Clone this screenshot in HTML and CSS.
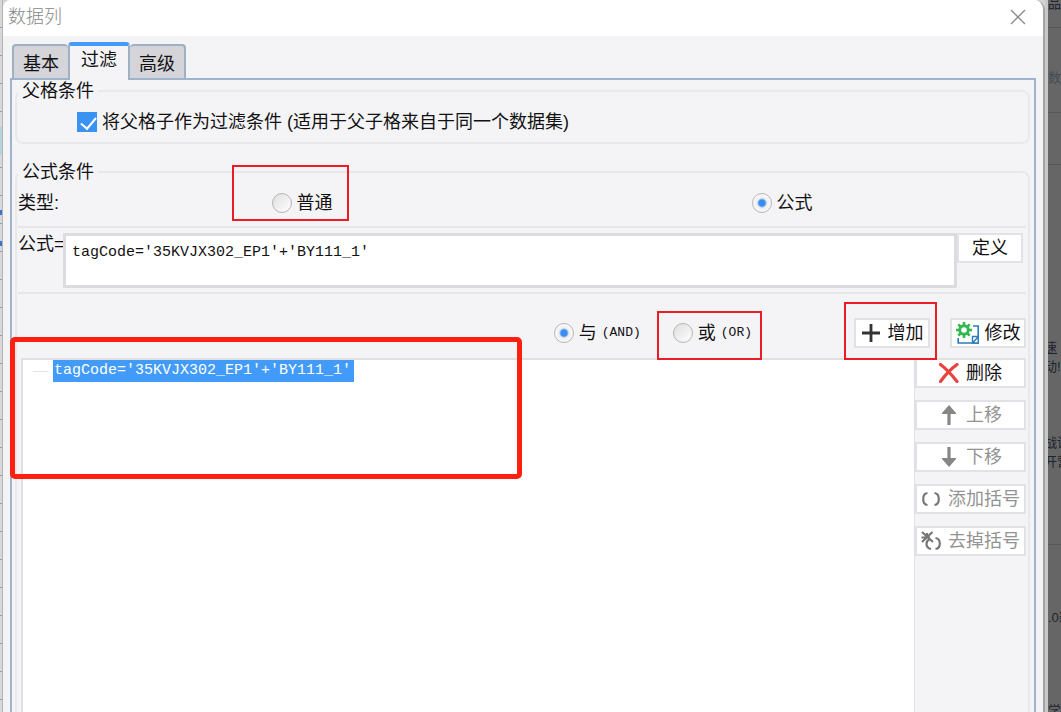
FILE: index.html
```html
<!DOCTYPE html>
<html lang="zh-CN">
<head>
  <meta charset="UTF-8" />
  <meta name="viewport" content="width=device-width, initial-scale=1.0" />
  <title>数据列</title>
  <link rel="stylesheet" href="styles.css">
</head>
<body>
  <div class="sheet-edge">
    <div class="cell-selected"></div>
    <div class="cell-handle"></div>
  </div>

  <main class="dialog">
    <header class="title-bar">
      <h1>数据列</h1>
      <button class="close" type="button" aria-label="关闭">
        <svg width="16" height="16" viewBox="0 0 16 16"><path d="M1 1L15 15M15 1L1 15" stroke="#8a8a8a" stroke-width="1.3" fill="none"/></svg>
      </button>
    </header>

    <div class="tabs" role="tablist">
      <button class="tab" type="button" role="tab">基本</button>
      <button class="tab active" type="button" role="tab" aria-selected="true">过滤</button>
      <button class="tab" type="button" role="tab">高级</button>
    </div>

    <div class="panel">
      <fieldset class="parent-group">
        <legend>父格条件</legend>
        <label class="option"><input type="checkbox" checked>将父格子作为过滤条件 (适用于父子格来自于同一个数据集)</label>
      </fieldset>

      <fieldset class="formula-group">
        <legend>公式条件</legend>

        <div class="type-row">
          <span>类型:</span>
          <label class="option"><input type="radio" name="type">普通</label>
          <label class="option"><input type="radio" name="type" checked>公式</label>
        </div>

        <div class="formula-row">
          <label for="formula">公式=</label>
          <textarea id="formula" class="code" spellcheck="false">tagCode='35KVJX302_EP1'+'BY111_1'</textarea>
          <button class="btn define" type="button">定义</button>
        </div>

        <div class="logic-row">
          <label class="option"><input type="radio" name="logic" checked>与<span class="latin">(AND)</span></label>
          <label class="option or"><input type="radio" name="logic">或<span class="latin">(OR)</span></label>
          <button class="btn add" type="button">
            <svg width="20" height="20" viewBox="0 0 20 20"><path d="M10 1V19M1 10H19" stroke="#333" stroke-width="2.8" fill="none"/></svg>
            增加
          </button>
          <button class="btn edit" type="button">
            <svg width="24" height="22" viewBox="0 0 24 22">
              <path d="M17 4H22.2V21H2.2V16" fill="none" stroke="#2b7cbf" stroke-width="1.6"/>
              <path d="M16.500 14.500H22.200V21H16.500ZM17 20.500L22 15" fill="#fff" stroke="#2b7cbf" stroke-width="1.4"/>
              <circle cx="8" cy="8" r="4.300" fill="#fff" stroke="#33b850" stroke-width="3"/>
              <path d="M8 0V3M8 13V16M0 8H3M13 8H16M2.300 2.300L4.500 4.500M11.500 11.500L13.700 13.700M13.700 2.300L11.500 4.500M4.500 11.500L2.300 13.700" stroke="#33b850" stroke-width="2.600"/>
            </svg>
            修改
          </button>
        </div>

        <div class="list-row">
          <ul class="conditions">
            <li><span class="code selected">tagCode='35KVJX302_EP1'+'BY111_1'</span></li>
          </ul>
          <div class="actions">
            <button class="btn" type="button">
              <svg width="20" height="20" viewBox="0 0 20 20"><path d="M1.500 1.500Q9 7 18 18.500M18 1.500Q9 8 1.500 18.500" stroke="#e8433f" stroke-width="3.2" fill="none" stroke-linecap="round"/></svg>
              删除
            </button>
            <button class="btn" type="button" disabled>
              <svg width="20" height="20" viewBox="0 0 20 20"><path d="M10 6V20" stroke="#868686" stroke-width="3.2"/><path d="M10 0L17 8V9H3V8Z" fill="#868686"/></svg>
              上移
            </button>
            <button class="btn" type="button" disabled>
              <svg width="20" height="20" viewBox="0 0 20 20"><path d="M10 0V14" stroke="#868686" stroke-width="3.2"/><path d="M10 20L17 12V11H3V12Z" fill="#868686"/></svg>
              下移
            </button>
            <button class="btn" type="button" disabled>
              <svg width="20" height="20" viewBox="0 0 20 20"><path d="M6.500 4Q2.200 4.500 2.200 10Q2.200 15.500 6.500 16M13.500 4Q17.800 4.500 17.800 10Q17.800 15.500 13.500 16" stroke="#777" stroke-width="2.2" fill="none"/></svg>
              添加括号
            </button>
            <button class="btn" type="button" disabled>
              <svg width="20" height="20" viewBox="0 0 20 20"><path d="M1 1L12 11M11.500 1L1 11M0.500 6.500H9M6 2V7" stroke="#777" stroke-width="2.2" fill="none"/><path d="M8.500 8.500Q5.500 9.500 5.500 13Q5.500 17 10 18M14.500 7Q18.800 7.500 18.800 12.500Q18.800 17.500 14.500 18" stroke="#777" stroke-width="2.2" fill="none"/></svg>
              去掉括号
            </button>
          </div>
        </div>
      </fieldset>
    </div>

    <div class="mark mark-type"></div>
    <div class="mark mark-or"></div>
    <div class="mark mark-add"></div>
    <div class="mark mark-list"></div>
  </main>

  <aside class="page-behind">
    <section class="bar">品</section>
    <section class="heading">数</section>
    <section class="blank"></section>
    <section class="news">
      <p><u>速</u><br>动!</p>
      <p>战训<br>开营</p>
    </section>
    <section class="release">
      <p>.0新</p>
      <p>学</p>
    </section>
  </aside>
</body>
</html>
```

FILE: styles.css
```css
* {
  box-sizing: border-box;
}

body {
  margin: 0;
  height: 100vh;
  display: flex;
  overflow: hidden;
  background: #d4d4d4;
  color: #111;
  font-family: "Liberation Sans", "Noto Sans CJK SC", sans-serif;
  font-size: 18px;
  line-height: 22px;
}

button,
textarea {
  font: inherit;
  color: inherit;
}

/* spreadsheet rows showing left of the dialog */
.sheet-edge {
  width: 3px;
  padding-top: 127px;
  background: repeating-linear-gradient(#d8d8d8 0, #d8d8d8 27px, #a0a0a0 27px, #a0a0a0 28px);
  border-right: 1px solid #b4b4b4;
}

.cell-selected {
  height: 28px;
  background: #b5d5de;
}

.cell-handle {
  height: 36px;
  margin-top: 55px;
  border: solid #3a72cc;
  border-width: 5px 0;
}

.dialog {
  flex: 1;
  min-width: 0;
  position: relative;
  display: flex;
  flex-direction: column;
  background: #f4f4f7;
  border-right: 2px solid #a3a3a3;
  border-radius: 8px 10px 0 0;
  overflow: hidden;
}

.title-bar {
  flex: none;
  height: 36px;
  display: flex;
  align-items: center;
  justify-content: space-between;
  padding: 0 17px 3px 5px;
  background: #fff;
}

.title-bar h1 {
  margin: 0;
  font-size: 18px;
  font-weight: 300;
  color: #888;
}

.close {
  display: flex;
  padding: 0;
  border: none;
  background: none;
}

/* tabs */
.tabs {
  flex: none;
  display: flex;
  align-items: flex-end;
  padding: 6px 9px 0;
}

.tab {
  height: 34px;
  padding: 4px 9px 0;
  border: 2px solid #9fb0c5;
  border-bottom: none;
  border-radius: 4px 4px 0 0;
  background: #d4d4d9;
}

.tab:first-child {
  border-right: none;
}

.tab:last-child {
  border-left: none;
}

.tab.active {
  height: 38px;
  margin-bottom: -2px;
  padding: 0 11px 6px;
  border-top: 4px solid #429bf8;
  background: #f4f4f7;
  z-index: 1;
}

.panel {
  flex: 1;
  min-height: 0;
  display: flex;
  flex-direction: column;
  margin: 0 7px;
  padding: 0 4px 0 3px;
  border: 2px solid #9fb3cd;
  border-bottom: none;
}

fieldset {
  margin: 0;
  min-width: 0;
  border: 2px solid #e9e9eb;
  border-radius: 8px;
}

legend {
  padding: 0 4px;
}

.parent-group {
  padding: 9px 1px 5px;
}

.parent-group .option {
  margin-left: 59px;
}

.formula-group {
  flex: 1;
  margin-top: 17px;
  padding: 0 2px 0 1px;
  border-bottom: none;
  border-radius: 8px 8px 0 0;
}

/* check box and radios */
.option {
  display: inline-flex;
  align-items: center;
  gap: 5px;
  white-space: pre;
}

.option input {
  appearance: none;
  flex: none;
  width: 20px;
  height: 20px;
  margin: 0;
}

.option input[type="checkbox"] {
  background: #3993f3;
  position: relative;
}

.option input[type="checkbox"]::after {
  content: "";
  position: absolute;
  left: 7px;
  top: 2px;
  width: 7px;
  height: 13px;
  border: solid #fff;
  border-width: 0 2px 2px 0;
  transform: rotate(40deg);
}

.option input[type="radio"] {
  border: 1px solid #b4b4b4;
  border-radius: 50%;
  background: linear-gradient(135deg, #dedede, #fff);
}

.option input[type="radio"]:checked {
  background: radial-gradient(circle, #3a8df0 0, #3a8df0 3px, #eee 5px, #fafafa 9px);
}

.latin {
  font-family: "Liberation Mono", monospace;
  font-size: 13px;
}

.code {
  font-family: "Liberation Mono", monospace;
  font-size: 15px;
}

.type-row {
  display: grid;
  grid-template-columns: 44px 1fr 1fr;
  align-items: center;
  justify-items: center;
  height: 45px;
  padding: 0 4px 3px 0;
  border-bottom: 2px solid #e6e6e9;
}

.type-row span {
  justify-self: start;
}

.formula-row {
  display: flex;
  align-items: flex-start;
  padding: 5px 3px 4px 0;
  border-bottom: 2px solid #e6e6e9;
}

.formula-row label {
  width: 45px;
  white-space: nowrap;
}

.formula-row textarea {
  flex: 1;
  height: 55px;
  padding: 6px;
  border: 3px solid #dcdce0;
  background: #fff;
  resize: none;
  outline: none;
}

.btn {
  height: 30px;
  display: flex;
  align-items: center;
  justify-content: center;
  gap: 7px;
  padding: 0 4px;
  border: 2px solid #e2e2e6;
  background: #fff;
  white-space: nowrap;
}

.btn svg {
  flex: none;
}

.btn:disabled {
  color: #939393;
}

.define {
  width: 66px;
}

.logic-row {
  display: flex;
  align-items: center;
  justify-content: flex-end;
  padding: 24px 0 10px;
}

.or {
  margin: 0 102px 0 32px;
}

.add,
.edit {
  width: 76px;
}

.edit {
  gap: 5px;
  margin-left: 20px;
}

.list-row {
  display: flex;
  height: 100%;
}

.conditions {
  flex: 1;
  margin: 0 0 0 3px;
  padding: 0 0 0 10px;
  list-style: none;
  background: #fff;
  border: 2px solid #e0e0e3;
  border-right-width: 1px;
}

.conditions li {
  display: flex;
  align-items: center;
  gap: 4px;
}

.conditions li::before {
  content: "";
  width: 16px;
  border-top: 1px solid #e4e4e4;
}

.selected {
  padding: 0 3px 0 1px;
  background: #429bf8;
  color: #fff;
}

.actions {
  width: 111px;
  display: flex;
  flex-direction: column;
  gap: 12px;
}

/* red highlight boxes */
.mark {
  position: absolute;
  border: 2px solid #ed1c24;
  pointer-events: none;
}

.mark-type {
  left: 229px;
  top: 165px;
  width: 117px;
  height: 56px;
}

.mark-or {
  left: 654px;
  top: 311px;
  width: 105px;
  height: 49px;
}

.mark-add {
  left: 841px;
  top: 302px;
  width: 93px;
  height: 58px;
}

.mark-list {
  left: 7px;
  top: 337px;
  width: 512px;
  height: 142px;
  border: 5px solid #ff1f10;
  border-radius: 5px;
}

/* dimmed page showing right of the dialog */
.page-behind {
  width: 16px;
  overflow: hidden;
  border-left: 3px solid #c8c8c8;
  background: #666;
  color: #20242e;
  font-size: 13px;
  line-height: 19px;
  white-space: nowrap;
}

.page-behind section {
  border-bottom: 1px solid #585858;
}

.page-behind p {
  margin: 0;
}

.page-behind .bar {
  height: 28px;
  line-height: 8px;
}

.page-behind .heading {
  height: 85px;
  padding-top: 40px;
  color: #444b55;
}

.page-behind .blank {
  height: 52px;
}

.page-behind .news {
  height: 380px;
  padding-top: 173px;
}

.page-behind .news p {
  margin: 0 0 57px -4px;
}

.page-behind .release {
  border: none;
  padding-top: 63px;
}

.page-behind .release p {
  margin-bottom: 74px;
}
```
